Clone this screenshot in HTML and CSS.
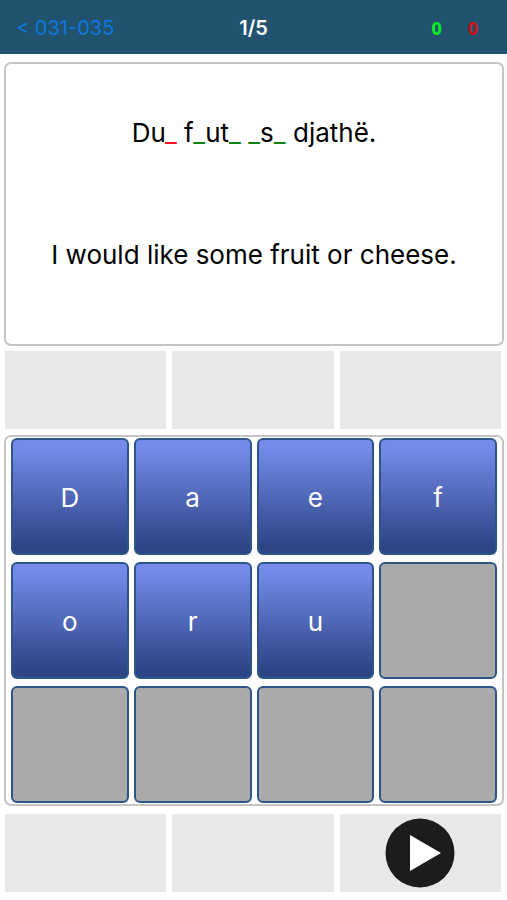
FILE: index.html
```html
<!DOCTYPE html>
<html lang="en">
<head>
<meta charset="utf-8">
<meta name="viewport" content="width=device-width, initial-scale=1">
<title>031-035</title>
<link rel="stylesheet" href="styles.css">
</head>
<body>
<header class="bar">
  <a class="back" href="#">&lt; 031-035</a>
  <h1 class="progress">1/5</h1>
  <div class="scores"><span class="right">0</span><span class="wrong">0</span></div>
</header>
<main class="game">
  <section class="card">
    <p class="phrase" lang="sq">Du<span class="current">_</span> f<span class="blank">_</span>ut<span class="blank">_</span> <span class="blank">_</span>s<span class="blank">_</span> djathë.</p>
    <p class="phrase">I would like some fruit or cheese.</p>
  </section>
  <div class="tray">
    <div class="slot"></div>
    <div class="slot"></div>
    <div class="slot"></div>
  </div>
  <section class="keys">
    <button class="key">D</button>
    <button class="key">a</button>
    <button class="key">e</button>
    <button class="key">f</button>
    <button class="key">o</button>
    <button class="key">r</button>
    <button class="key">u</button>
    <button class="key" disabled></button>
    <button class="key" disabled></button>
    <button class="key" disabled></button>
    <button class="key" disabled></button>
    <button class="key" disabled></button>
  </section>
  <div class="tray">
    <div class="slot"></div>
    <div class="slot"></div>
    <div class="slot">
      <button class="play" aria-label="Play">
        <svg class="play-icon" viewBox="0 0 70 70" aria-hidden="true">
          <circle cx="35" cy="35" r="34.5" fill="#1c1c1a"/>
          <path d="M25 17 L56 35 L25 53 Z" fill="#fff"/>
        </svg>
      </button>
    </div>
  </div>
</main>
</body>
</html>
```

FILE: styles.css
```css
* {
  box-sizing: border-box;
}

body {
  margin: 0;
  min-height: 100vh;
  display: flex;
  flex-direction: column;
  background: #fff;
  color: #000;
  font-family: Inter, "Liberation Sans", sans-serif;
}

.bar {
  display: grid;
  grid-template-columns: 1fr auto 1fr;
  align-items: center;
  height: 54px;
  padding: 2px 16px 0;
  background: #21526e;
}

.back {
  color: #0f78e0;
  font-size: 20px;
  text-decoration: none;
}

.progress {
  margin: 0;
  color: #fff;
  font-size: 20px;
  font-weight: 600;
}

.scores {
  display: flex;
  justify-content: flex-end;
  gap: 26px;
  padding-right: 13px;
  font-family: "Open Sans", "Liberation Sans", sans-serif;
  font-size: 18px;
  font-weight: 700;
}

.right {
  color: #0bf020;
}

.wrong {
  color: #d01218;
}

.game {
  flex: 1;
  display: grid;
  grid-template-rows: 284fr 78fr 375fr 78fr;
  gap: 5px;
  padding: 8px 3px 8px 4px;
}

.card,
.keys {
  border: 2px solid #c4c4c4;
  border-radius: 7px;
}

.card {
  display: grid;
  grid-template-rows: 1fr 1fr;
  align-items: center;
  padding: 8px 0 28px;
  text-align: center;
}

.phrase {
  margin: 0;
  font-size: 26px;
  line-height: 32px;
}

.current {
  color: #f01020;
}

.blank {
  color: #108010;
}

.tray {
  display: grid;
  grid-template-columns: repeat(3, 1fr);
  gap: 6px;
  padding: 0 3px 0 1px;
}

.slot {
  display: flex;
  align-items: center;
  justify-content: center;
  background: #e8e8e8;
}

.keys {
  display: grid;
  grid-template-columns: repeat(4, 1fr);
  grid-template-rows: repeat(3, 1fr);
  gap: 7px 5px;
  margin: 1px 0 3px;
  padding: 1px 5px;
}

.key {
  padding: 2px 0 0;
  border: 2px solid #2d5688;
  border-radius: 6px;
  background: linear-gradient(#748bea 8%, #2d4587 92%) border-box;
  color: #fff;
  font-family: inherit;
  font-size: 26px;
}

.key:disabled {
  background: #aaa;
}

.play {
  width: 70px;
  height: 70px;
  padding: 0;
  border: 0;
  border-radius: 50%;
  background: none;
}

.play-icon {
  display: block;
}
```
